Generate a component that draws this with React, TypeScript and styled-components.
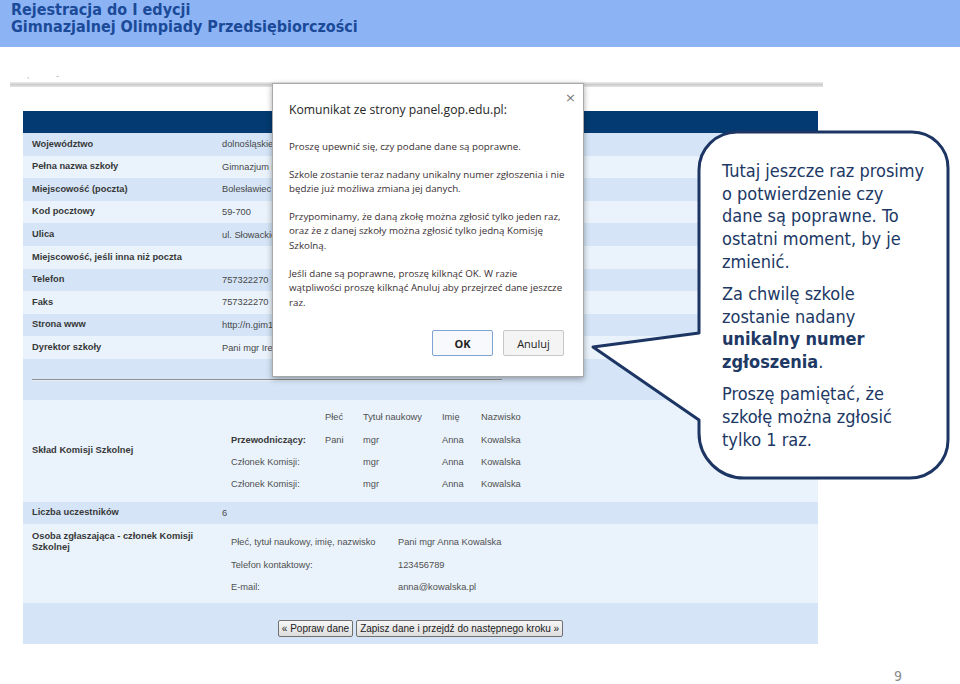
import React from "react";
import styled, { createGlobalStyle } from "styled-components";

const GlobalStyle = createGlobalStyle`
  html, body { margin: 0; padding: 0; background: #ffffff; }
  #root { width: 960px; height: 684px; }
`;

const Slide = styled.div`
  position: relative;
  width: 960px;
  height: 684px;
  overflow: hidden;
  display: flex;
  flex-direction: column;
  background: #ffffff;
`;

const TitleBar = styled.header`
  height: 47px;
  box-sizing: border-box;
  padding: 1px 0 0 11px;
  background: #8cb4f5;
  color: #1b4a98;
  font-family: "DejaVu Sans Condensed", "DejaVu Sans", sans-serif;
  font-weight: bold;
  font-size: 16px;
  display: flex;
  flex-direction: column;
`;

const TitleLine = styled.span`
  display: block;
  height: 17px;
  line-height: 18px;
  white-space: nowrap;
`;

const Shot = styled.section`
  margin: 25px 0 0 10px;
  width: 813px;
  display: flex;
  flex-direction: column;
`;

const CropMarks = styled.div`
  height: 10px;
  display: flex;
  gap: 27px;
  padding-left: 17px;
  font-family: "Liberation Sans", Arial, sans-serif;
  font-size: 8px;
  line-height: 8px;
  color: #8a8a8a;
`;

const GrayRule = styled.div`
  height: 5px;
  background: linear-gradient(#eeeeee, #cdcdcd 50%, #e4e4e4);
`;

const Table = styled.div`
  margin: 24px 0 0 13px;
  width: 795px;
  font-family: "Liberation Sans", Arial, sans-serif;
  font-size: 9.3px;
  color: #444444;
`;

const NavyBar = styled.div`
  height: 22px;
  background: #033a71;
`;

type Tone = "dark" | "light";

const Row = styled.div<{ $tone: Tone; $h: number; $align?: "center" | "start" }>`
  display: grid;
  grid-template-columns: 199px 1fr;
  height: ${(p) => p.$h}px;
  align-items: ${(p) => (p.$align === "start" ? "start" : "center")};
  background: ${(p) => (p.$tone === "dark" ? "#d5e5f7" : "#eaf3fc")};
  overflow: hidden;
`;

const Label = styled.div<{ $top?: number }>`
  padding: ${(p) => p.$top ?? 0}px 8px 0 9px;
  font-weight: bold;
  color: #383838;
  line-height: 11.5px;
`;

const Value = styled.div`
  color: #474747;
  white-space: nowrap;
`;

const Divider = styled.div`
  grid-column: 1 / span 2;
  margin-left: 9px;
  width: 470px;
  height: 1px;
  background: #8f8f8f;
  box-shadow: 0 1px 0 #e6eef8;
`;

const SubGrid = styled.div<{ $cols: string; $top: number }>`
  display: grid;
  grid-template-columns: ${(p) => p.$cols};
  grid-auto-rows: 22.4px;
  align-items: center;
  padding: ${(p) => p.$top}px 0 0 9px;
  white-space: nowrap;
`;

const Cell = styled.span<{ $strong?: boolean }>`
  font-weight: ${(p) => (p.$strong ? "bold" : "normal")};
  color: ${(p) => (p.$strong ? "#383838" : "#505050")};
`;

const ButtonRow = styled.div`
  height: 41px;
  background: #d5e5f7;
  display: flex;
  justify-content: center;
  align-items: flex-start;
  gap: 3px;
  padding-top: 17px;
  box-sizing: border-box;
`;

const FormButton = styled.button`
  height: 17px;
  padding: 0 3px;
  margin: 0;
  font-family: "Liberation Sans", Arial, sans-serif;
  font-size: 10px;
  line-height: 15px;
  color: #222222;
  background: linear-gradient(#f6f6f6, #dedede);
  border: 1px solid #707070;
  border-radius: 2px;
`;

const Footer = styled.footer`
  margin-top: auto;
  height: 16px;
  padding-right: 58px;
  display: flex;
  justify-content: flex-end;
  font-family: "DejaVu Sans Condensed", "DejaVu Sans", sans-serif;
  font-size: 14px;
  line-height: 16px;
  color: #8a8a8a;
`;

/* ---------- dialog ---------- */

const Dialog = styled.div`
  position: absolute;
  left: 272px;
  top: 83px;
  width: 312px;
  height: 294px;
  box-sizing: border-box;
  background: #ffffff;
  border: 1px solid #a8a8a8;
  box-shadow: 0 2px 6px rgba(0, 0, 0, 0.35);
  padding: 17px 19px 0 16px;
  font-family: "Open Sans", "Noto Sans", sans-serif;
  color: #333333;
`;

const DialogTitle = styled.div`
  font-size: 12.2px;
  line-height: 18px;
  color: #262626;
  white-space: nowrap;
`;

const CloseMark = styled.span`
  position: absolute;
  right: 7px;
  top: 5px;
  font-family: "DejaVu Sans", sans-serif;
  font-size: 13px;
  line-height: 18px;
  color: #7a7a7a;
`;

const DialogBody = styled.div`
  margin-top: 21px;
  font-size: 9.75px;
  line-height: 14.5px;
  color: #3a3034;
  white-space: nowrap;
  p {
    margin: 0 0 13.2px 0;
  }
`;

const DialogActions = styled.div`
  position: absolute;
  right: 19px;
  top: 246px;
  display: flex;
  gap: 10px;
`;

const DialogButton = styled.button<{ $primary?: boolean }>`
  width: 61px;
  height: 26px;
  margin: 0;
  padding: 0;
  font-family: "Open Sans", "Noto Sans", sans-serif;
  font-size: 11px;
  font-weight: ${(p) => (p.$primary ? "bold" : "normal")};
  color: #222222;
  background: ${(p) => (p.$primary ? "#f7f9fc" : "#f4f4f4")};
  border: 1px solid ${(p) => (p.$primary ? "#7fa3d3" : "#c7c7c7")};
  border-radius: 2px;
`;

/* ---------- callout ---------- */

const Callout = styled.div`
  position: absolute;
  left: 590px;
  top: 128px;
  width: 362px;
  height: 354px;
`;

const Bubble = styled.svg`
  position: absolute;
  left: 0;
  top: 0;
`;

const CalloutText = styled.div`
  position: relative;
  padding: 32px 0 0 132px;
  font-family: "DejaVu Sans Condensed", "DejaVu Sans", sans-serif;
  font-size: 18px;
  line-height: 22.7px;
  color: #203864;
  white-space: nowrap;
  p {
    margin: 0 0 9.5px 0;
  }
  b {
    font-weight: bold;
  }
`;

const rows: { label: string; value: string }[] = [
  { label: "Województwo", value: "dolnośląskie" },
  { label: "Pełna nazwa szkoły", value: "Gimnazjum nr" },
  { label: "Miejscowość (poczta)", value: "Bolesławiec" },
  { label: "Kod pocztowy", value: "59-700" },
  { label: "Ulica", value: "ul. Słowackiego" },
  { label: "Miejscowość, jeśli inna niż poczta", value: "" },
  { label: "Telefon", value: "757322270" },
  { label: "Faks", value: "757322270" },
  { label: "Strona www", value: "http://n.gim1" },
  { label: "Dyrektor szkoły", value: "Pani mgr Irena" },
];

const committee = [
  { role: "Przewodniczący:", strong: true, sex: "Pani" },
  { role: "Członek Komisji:", strong: false, sex: "" },
  { role: "Członek Komisji:", strong: false, sex: "" },
];

export default function App() {
  return (
    <Slide>
      <GlobalStyle />
      <TitleBar>
        <TitleLine>Rejestracja do I edycji</TitleLine>
        <TitleLine>Gimnazjalnej Olimpiady Przedsiębiorczości</TitleLine>
      </TitleBar>

      <Shot>
        <CropMarks>
          <span>,</span>
          <span>-</span>
        </CropMarks>
        <GrayRule />
        <Table>
          <NavyBar />
          {rows.map((r, i) => (
            <Row key={r.label} $tone={i % 2 === 0 ? "dark" : "light"} $h={22.6}>
              <Label>{r.label}</Label>
              <Value>{r.value}</Value>
            </Row>
          ))}
          <Row $tone="dark" $h={41}>
            <Divider />
          </Row>
          <Row $tone="light" $h={102} $align="start">
            <Label $top={45}>Skład Komisji Szkolnej</Label>
            <SubGrid $cols="94px 38px 79px 39px auto" $top={6}>
              <Cell />
              <Cell>Płeć</Cell>
              <Cell>Tytuł naukowy</Cell>
              <Cell>Imię</Cell>
              <Cell>Nazwisko</Cell>
              {committee.map((c, i) => (
                <React.Fragment key={i}>
                  <Cell $strong={c.strong}>{c.role}</Cell>
                  <Cell>{c.sex}</Cell>
                  <Cell>mgr</Cell>
                  <Cell>Anna</Cell>
                  <Cell>Kowalska</Cell>
                </React.Fragment>
              ))}
            </SubGrid>
          </Row>
          <Row $tone="dark" $h={22}>
            <Label>Liczba uczestników</Label>
            <Value>6</Value>
          </Row>
          <Row $tone="light" $h={79} $align="start">
            <Label $top={7}>Osoba zgłaszająca - członek Komisji Szkolnej</Label>
            <SubGrid $cols="167px auto" $top={7}>
              <Cell>Płeć, tytuł naukowy, imię, nazwisko</Cell>
              <Cell>Pani mgr Anna Kowalska</Cell>
              <Cell>Telefon kontaktowy:</Cell>
              <Cell>123456789</Cell>
              <Cell>E-mail:</Cell>
              <Cell>anna@kowalska.pl</Cell>
            </SubGrid>
          </Row>
          <ButtonRow>
            <FormButton type="button">« Popraw dane</FormButton>
            <FormButton type="button">Zapisz dane i przejdź do następnego kroku »</FormButton>
          </ButtonRow>
        </Table>
      </Shot>

      <Footer>9</Footer>

      <Dialog>
        <CloseMark>×</CloseMark>
        <DialogTitle>Komunikat ze strony panel.gop.edu.pl:</DialogTitle>
        <DialogBody>
          <p>Proszę upewnić się, czy podane dane są poprawne.</p>
          <p>
            Szkole zostanie teraz nadany unikalny numer zgłoszenia i nie
            <br />
            będzie już możliwa zmiana jej danych.
          </p>
          <p>
            Przypominamy, że daną zkołę można zgłosić tylko jeden raz,
            <br />
            oraz że z danej szkoły można zgłosić tylko jedną Komisję
            <br />
            Szkolną.
          </p>
          <p>
            Jeśli dane są poprawne, proszę kilknąć OK. W razie
            <br />
            wątpliwości proszę kilknąć Anuluj aby przejrzeć dane jeszcze
            <br />
            raz.
          </p>
        </DialogBody>
        <DialogActions>
          <DialogButton type="button" $primary>
            OK
          </DialogButton>
          <DialogButton type="button">Anuluj</DialogButton>
        </DialogActions>
      </Dialog>

      <Callout>
        <Bubble width="362" height="354" viewBox="0 0 362 354">
          <path
            d="M109 42 A38 38 0 0 1 147 4 L322 4 A36 36 0 0 1 358 40 L358 312 A38 38 0 0 1 320 350 L154 350 A45 45 0 0 1 109 305 L109 292 L3 219 L109 205 Z"
            fill="#ffffff"
            stroke="#1d3563"
            strokeWidth="3"
            strokeLinejoin="round"
          />
        </Bubble>
        <CalloutText>
          <p>
            Tutaj jeszcze raz prosimy
            <br />o potwierdzenie czy
            <br />
            dane są poprawne. To
            <br />
            ostatni moment, by je
            <br />
            zmienić.
          </p>
          <p>
            Za chwilę szkole
            <br />
            zostanie nadany
            <br />
            <b>unikalny numer</b>
            <br />
            <b>zgłoszenia</b>.
          </p>
          <p>
            Proszę pamiętać, że
            <br />
            szkołę można zgłosić
            <br />
            tylko 1 raz.
          </p>
        </CalloutText>
      </Callout>
    </Slide>
  );
}
